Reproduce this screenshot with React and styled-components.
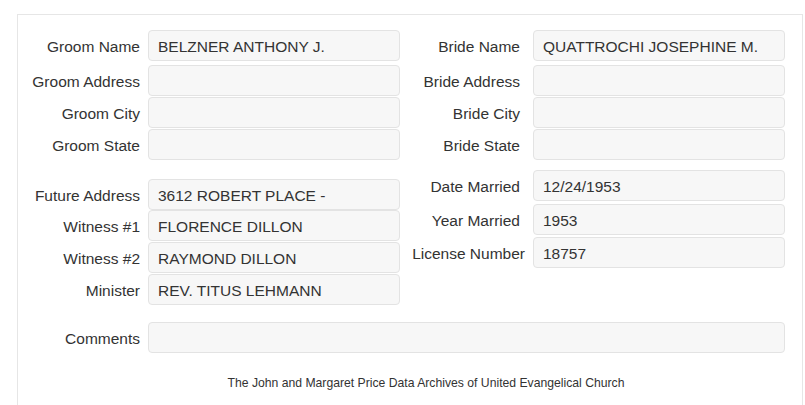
import React from 'react';
import styled, { createGlobalStyle } from 'styled-components';

const GlobalStyle = createGlobalStyle`
  body {
    margin: 0;
    background: #fff;
    font-family: "Liberation Sans", Arial, sans-serif;
    color: #333;
    overflow: hidden;
  }
`;

const Panel = styled.div`
  margin: 14px 0 0 17px;
  width: 786px;
  height: 391px;
  box-sizing: border-box;
  border: 1px solid #e6e6e6;
  border-bottom: none;
  padding: 15px 17px 0 0;
`;

const Columns = styled.div`
  display: grid;
  grid-template-columns: 382px 385px;
`;

const Column = styled.div`
  display: flex;
  flex-direction: column;
`;

const Row = styled.div`
  display: flex;
  align-items: center;
  gap: 8px;
  margin-bottom: ${p => p.$mb || 0}px;
`;

const Label = styled.div`
  width: ${p => p.$w}px;
  flex: none;
  box-sizing: border-box;
  padding-top: 3px;
  padding-right: ${p => p.$pr || 0}px;
  text-align: right;
  white-space: nowrap;
  font-size: 15.5px;
  color: #333;
`;

const Field = styled.div`
  width: ${p => p.$w || 252}px;
  height: 31px;
  flex: none;
  box-sizing: border-box;
  border: 1px solid #e3e3e3;
  border-radius: 4px;
  background: #f7f7f7;
  padding: 3px 9px 0;
  display: flex;
  align-items: center;
  font-size: 15.5px;
  color: #333;
  white-space: nowrap;
`;

const CommentsRow = styled(Row)`
  margin-top: 17px;
`;

const Footer = styled.div`
  margin-top: 23px;
  padding-left: 49px;
  text-align: center;
  font-size: 12.2px;
  color: #333;
`;

const left = [
  ['Groom Name', 'BELZNER ANTHONY J.', 4],
  ['Groom Address', '', 1],
  ['Groom City', '', 1],
  ['Groom State', '', 19],
  ['Future Address', '3612 ROBERT PLACE -', 0],
  ['Witness #1', 'FLORENCE DILLON', 1],
  ['Witness #2', 'RAYMOND DILLON', 1],
  ['Minister', 'REV. TITUS LEHMANN', 0],
];

const right = [
  ['Bride Name', 'QUATTROCHI JOSEPHINE M.', 4],
  ['Bride Address', '', 1],
  ['Bride City', '', 1],
  ['Bride State', '', 10],
  ['Date Married', '12/24/1953', 3],
  ['Year Married', '1953', 2],
  ['License Number', '18757', 0],
];

export default function App() {
  return (
    <>
      <GlobalStyle />
      <Panel>
        <Columns>
          <Column>
            {left.map(([label, value, mb]) => (
              <Row key={label} $mb={mb}>
                <Label $w={122}>{label}</Label>
                <Field>{value}</Field>
              </Row>
            ))}
          </Column>
          <Column>
            {right.map(([label, value, mb]) => (
              <Row key={label} $mb={mb}>
                <Label $w={125} $pr={label === 'License Number' ? 0 : 5}>{label}</Label>
                <Field>{value}</Field>
              </Row>
            ))}
          </Column>
        </Columns>
        <CommentsRow>
          <Label $w={122}>Comments</Label>
          <Field $w={637} />
        </CommentsRow>
        <Footer>The John and Margaret Price Data Archives of United Evangelical Church</Footer>
      </Panel>
    </>
  );
}
